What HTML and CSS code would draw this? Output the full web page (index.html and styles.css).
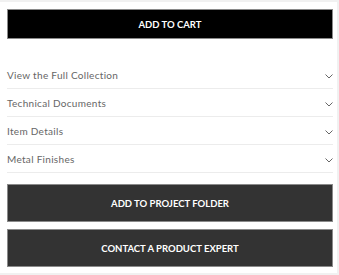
FILE: index.html
```html
<!DOCTYPE html>
<html lang="en">
<head>
  <meta charset="UTF-8">
  <meta name="viewport" content="width=device-width, initial-scale=1.0">
  <title>Product actions</title>
  <link rel="stylesheet" href="styles.css">
</head>
<body>
  <div class="panel">
    <button class="btn btn-black">ADD TO CART</button>

    <ul class="accordion">
      <li class="acc-row"><span>View the Full Collection</span><svg class="chev" viewBox="0 0 8 5"><polyline points="0.5,0.5 4,4 7.5,0.5"/></svg></li>
      <li class="acc-row"><span>Technical Documents</span><svg class="chev" viewBox="0 0 8 5"><polyline points="0.5,0.5 4,4 7.5,0.5"/></svg></li>
      <li class="acc-row"><span>Item Details</span><svg class="chev" viewBox="0 0 8 5"><polyline points="0.5,0.5 4,4 7.5,0.5"/></svg></li>
      <li class="acc-row"><span>Metal Finishes</span><svg class="chev" viewBox="0 0 8 5"><polyline points="0.5,0.5 4,4 7.5,0.5"/></svg></li>
    </ul>

    <button class="btn btn-dark">ADD TO PROJECT FOLDER</button>
    <button class="btn btn-dark">CONTACT A PRODUCT EXPERT</button>
  </div>
</body>
</html>
```

FILE: styles.css
```css
*{
  margin: 0;
  padding: 0;
  box-sizing: border-box;
}
body{
  background-color: #f1f1f1;
  padding: 2px 2px 2px 0;
  font-family: Lato, "Liberation Sans", sans-serif;
}
.panel{
  background-color: #fff;
  height: 271px;
  padding: 7px 4px 0 7px;
  display: flex;
  flex-direction: column;
}
.btn{
  display: block;
  width: 100%;
  height: 30px;
  border: 1px solid #8a8a8a;
  color: #fff;
  font-family: inherit;
  font-size: 9.5px;
  font-weight: bold;
  letter-spacing: 0;
}
.btn-black{
  background-color: #000;
}
.btn-dark{
  background-color: #333;
  height: 38px;
  margin-top: 7px;
}
.accordion{
  list-style: none;
  margin-top: 22px;
  margin-bottom: 4px;
}
.acc-row{
  height: 28px;
  display: flex;
  align-items: center;
  justify-content: space-between;
  border-bottom: 1px solid #ececec;
  font-size: 10px;
  color: #666;
  letter-spacing: 0.3px;
}
.chev{
  width: 8px;
  height: 5px;
  margin-top: 3px;
  fill: none;
  stroke: #666;
  stroke-width: 1;
}
```
